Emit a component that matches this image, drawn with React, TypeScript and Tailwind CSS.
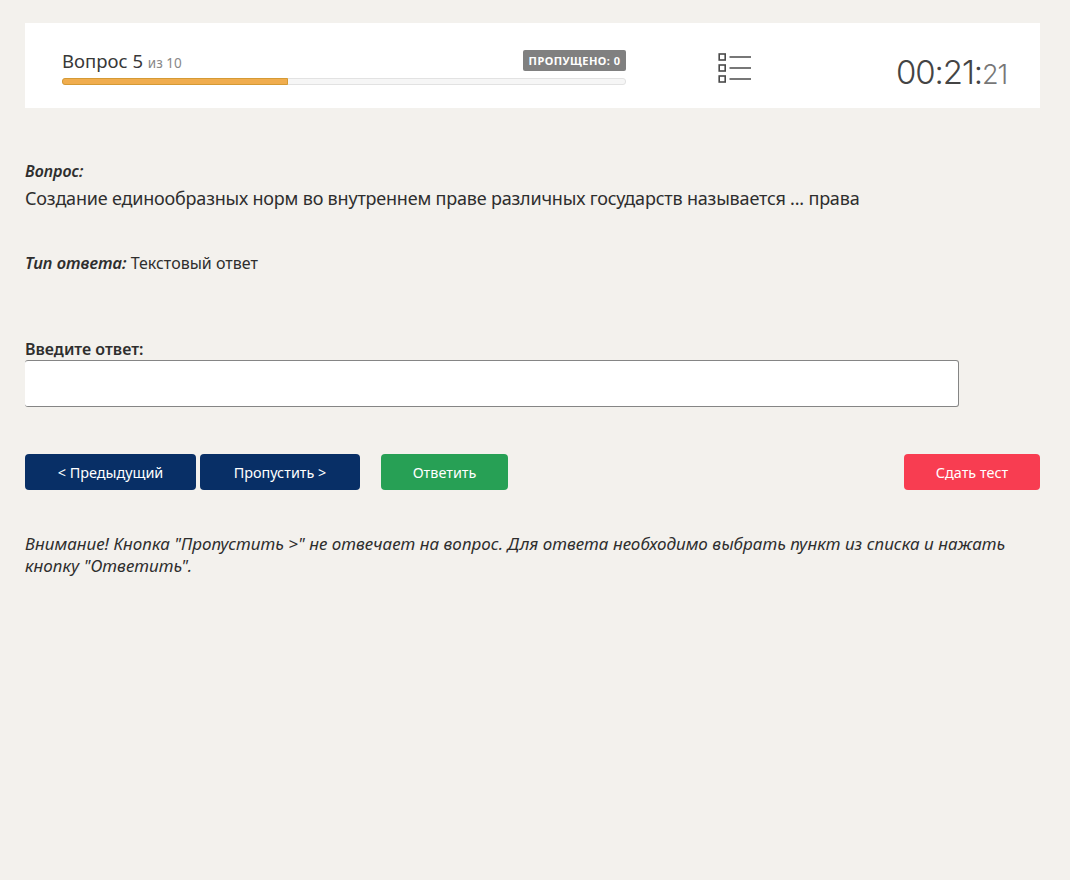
import { useState } from "react";

const TOTAL = 10;
const CURRENT = 5;

const QuestionListIcon = () => (
  <svg width="34" height="32" viewBox="0 0 34 32" fill="none" stroke="#4a4a4a">
    {[2, 13, 24].map((y) => (
      <g key={y}>
        <rect x="1.2" y={y} width="6" height="6" strokeWidth="1.6" />
        <path d={`M11.5 ${y + 3}H33`} strokeWidth="1.5" />
      </g>
    ))}
  </svg>
);

const Header = () => {
  return (
    <header className="flex h-[85px] w-[1015px] bg-white pl-[37px] pr-[33px]">
      <div className="w-[564px] pt-[27px]">
        <div className="flex h-[21px] items-center justify-between">
          <div className="whitespace-nowrap pt-[2px] text-[18.5px] leading-6 text-[#383838]">
            Вопрос {CURRENT} <span className="text-[13.5px] text-[#888]">из {TOTAL}</span>
          </div>
          <span className="flex h-[21px] w-[103px] items-center justify-center whitespace-nowrap rounded-[2px] bg-[#808080] pt-px text-[11px] font-bold tracking-[0.45px] text-white">
            ПРОПУЩЕНО: 0
          </span>
        </div>
        {/* Progress */}
        <div className="mt-[7px] h-[7px] rounded-[3px] border border-[#e2e2e2] bg-[#f6f6f6]">
          <div className="-ml-px -mt-px h-[7px] w-[226px] rounded-l-[3px] border border-[#d59a35] bg-[#f0ad4e]"></div>
        </div>
      </div>
      <button className="ml-[92px] mt-[29px] h-[32px]">
        <QuestionListIcon />
      </button>
      <div className="ml-auto mt-[26px] whitespace-nowrap font-['Inter'] text-[33px] font-light leading-[46px] tracking-[-1.1px] text-[#444]">
        00:21:<span className="text-[27px] text-[#777]">21</span>
      </div>
    </header>
  );
};

const App = () => {
  const [answer, setAnswer] = useState("");
  return (
    <div className="min-h-screen bg-[#f3f1ed] pl-[25px] pt-[23px] font-['Noto_Sans',sans-serif] text-[#2e2e2e]">
      <Header />
      <main className="w-[1015px]">
        <section className="pt-[52px]">
          <p className="text-[16px] font-semibold italic leading-[22px]">Вопрос:</p>
          <p className="mt-[3px] whitespace-nowrap text-[18px] leading-[26px] tracking-[-0.2px]">
            Создание единообразных норм во внутреннем праве различных государств называется ... права
          </p>
        </section>
        <p className="mt-[41px] whitespace-nowrap text-[16px] leading-[22px]">
          <span className="text-[16.5px] font-semibold italic">Тип ответа:</span> <span>Текстовый ответ</span>
        </p>
        <label className="mt-[64px] block text-[16px] font-semibold leading-[22px]" htmlFor="answer">
          Введите ответ:
        </label>
        <textarea
          id="answer"
          value={answer}
          onChange={(e) => setAnswer(e.target.value)}
          className="block h-[47px] w-[934px] resize-none rounded-[3px] border border-l-0 border-[#858585] bg-white"
        />
        <div className="mt-[47px] flex h-[36px] text-[14.4px] text-white">
          <button className="w-[171px] rounded-[4px] bg-[#082f66] pt-px">&lt; Предыдущий</button>
          <button className="ml-[4px] w-[160px] rounded-[4px] bg-[#082f66] pt-px">Пропустить &gt;</button>
          <button className="ml-[21px] w-[127px] rounded-[4px] bg-[#27a055] pt-px">Ответить</button>
          <button className="ml-auto w-[136px] rounded-[4px] bg-[#f83d51] pt-px">Сдать тест</button>
        </div>
        <p className="mt-[43px] whitespace-nowrap text-[17px] italic leading-[22px] tracking-[0.02px]">
          Внимание! Кнопка "Пропустить &gt;" не отвечает на вопрос. Для ответа необходимо выбрать пункт из списка и нажать
          <br />
          кнопку "Ответить".
        </p>
      </main>
    </div>
  );
};

export default App;
